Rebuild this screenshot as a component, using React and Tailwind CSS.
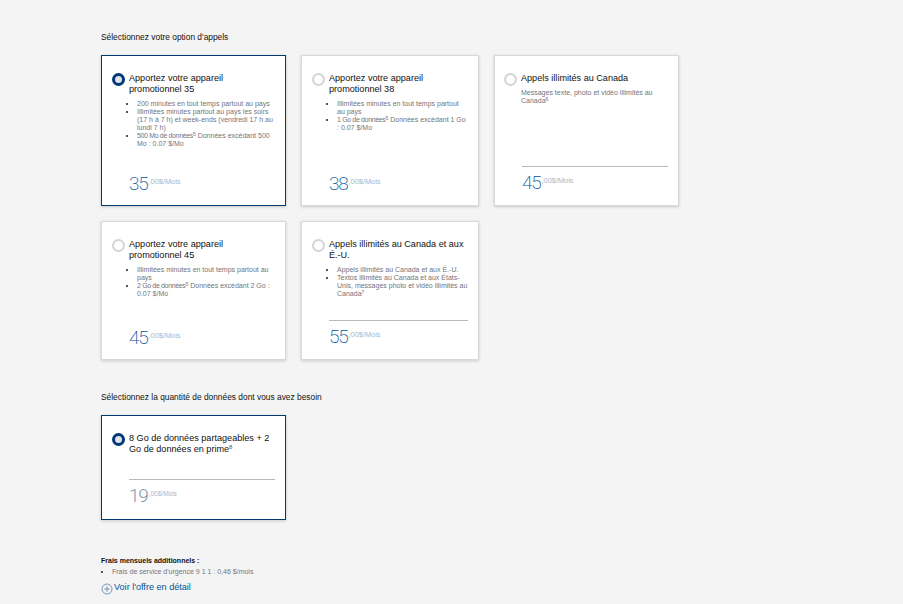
import React from "react";

const sans = "font-['Liberation_Sans',Arial,sans-serif]";

function Radio({ on }) {
  return on ? (
    <span className="block h-[13px] w-[13px] shrink-0 rounded-full border-[3.5px] border-[#003778] bg-[#dfe3e8]" />
  ) : (
    <span className="block h-[13px] w-[13px] shrink-0 rounded-full border-2 border-[#d4d4d4] bg-white" />
  );
}

function Price({ value, muted }) {
  return (
    <div className="flex items-start">
      <span className={`font-['Roboto',sans-serif] text-[19px] leading-[20px] tracking-[-1.2px] ${muted ? "font-light text-[#7f97b0]" : "font-extralight text-[#00549a]"}`}>{value}</span>
      <span className={`mt-[3px] ml-[1px] leading-[10px] text-[#a9b6c9] ${muted ? "text-[6.5px]" : "text-[7.4px]"}`}>,00$/Mois</span>
    </div>
  );
}

function Card({ title, on, items, text, price, rule, className, sup, nudge, muted }) {
  return (
    <div
      className={`flex flex-col px-[10px] pt-[17px] border ${on ? "border-[#003a70]" : "border-[#d8d8d8]"} bg-white shadow-[0_1px_3px_rgba(0,0,0,0.18)] ${className}`}
    >
      <div className={`flex gap-[4px] ${nudge ? "-ml-[1px]" : ""}`}>
        <Radio on={on} />
        <div className="text-[9.1px] leading-[11px] text-[#111]">
          {title}
          {sup && <sup className="text-[6px] leading-none text-[#555]">{sup}</sup>}
        </div>
      </div>
      <div className={`ml-[17px] flex-1 text-[7px] leading-[8px] text-[#74747c] ${text ? "mt-[3px]" : "mt-[5px]"}`}>
        {text && <p className={nudge ? "-ml-[1px]" : ""}>{text}</p>}
        {items && (
          <ul className="list-[square] pl-[8px] marker:text-[#555]">
            {items.map((it, i) => (
              <li key={i}>{it}</li>
            ))}
          </ul>
        )}
      </div>
      <div className={`ml-[17px] h-[29px] ${muted ? "mb-[11px]" : "mb-[10px]"} ${rule ? "border-t border-[#b9b9b9]" : ""}`}>
        <div className={rule ? "mt-[6px]" : "mt-[8px]"}>
          <Price value={price} muted={muted} />
        </div>
      </div>
    </div>
  );
}

const S = ({ children }) => <sup className="text-[5px] leading-none">{children}</sup>;
const T = ({ children }) => <span className="tracking-[-0.35px]">{children}</span>;

export default function App() {
  return (
    <div className={`${sans} h-[604px] w-[903px] overflow-hidden bg-[#f4f4f4] pl-[101px] pt-[32px]`}>
      <h2 className="text-[8.4px] leading-[11px] font-normal text-[#111]">Sélectionnez votre option d'appels</h2>
      <div className="mt-[12px] flex gap-[15px]">
        <Card
          className="h-[151px] w-[185px]"
          on
          title="Apportez votre appareil promotionnel 35"
          price="35"
          items={[
            "200 minutes en tout temps partout au pays",
            "Illimitées minutes partout au pays les soirs (17 h à 7 h) et week-ends (vendredi 17 h au lundi 7 h)",
            <><T>500 Mo de données</T><S>5</S> Données excédant 500 Mo : 0.07 $/Mo</>,
          ]}
        />
        <Card
          className="h-[151px] w-[178px]"
          title="Apportez votre appareil promotionnel 38"
          price="38"
          items={[
            "Illimitées minutes en tout temps partout au pays",
            <><T>1 Go de données</T><S>5</S> Données excédant 1 Go : 0.07 $/Mo</>,
          ]}
        />
        <Card
          className="h-[151px] w-[185px]"
          title="Appels illimités au Canada"
          price="45"
          rule
          nudge
          text={<>Messages texte, photo et vidéo illimités au Canada<S>6</S></>}
        />
      </div>
      <div className="mt-[15px] flex gap-[15px]">
        <Card
          className="h-[139px] w-[185px]"
          title="Apportez votre appareil promotionnel 45"
          price="45"
          items={[
            "Illimitées minutes en tout temps partout au pays",
            <><T>2 Go de données</T><S>5</S> Données excédant 2 Go : 0.07 $/Mo</>,
          ]}
        />
        <Card
          className="h-[139px] w-[178px]"
          title="Appels illimités au Canada et aux É.-U."
          price="55"
          rule
          items={[
            "Appels illimités au Canada et aux É.-U.",
            <>Textos illimités au Canada et aux États-Unis, messages photo et vidéo illimités au Canada<S>7</S></>,
          ]}
        />
      </div>
      <h2 className="mt-[32px] text-[8.4px] leading-[11px] font-normal text-[#111]">Sélectionnez la quantité de données dont vous avez besoin</h2>
      <div className="mt-[12px]">
        <Card
          className="h-[105px] w-[185px]"
          on
          title="8 Go de données partageables + 2 Go de données en prime"
          sup="8"
          price="19"
          rule
          muted
        />
      </div>
      <div className="mt-[37px] text-[7px] leading-[8px] font-bold text-[#111]">Frais mensuels additionnels :</div>
      <ul className="mt-[1px] list-[square] pl-[11px] text-[7px] leading-[11px] text-[#74747c] marker:text-[#555]">
        <li>Frais de service d'urgence 9 1 1 : 0,46 $/mois</li>
      </ul>
      <div className="mt-[4px] flex items-start gap-[1px] text-[9.1px] leading-[12px] text-[#00549a]">
        <svg width="12" height="12" viewBox="0 0 12 12" fill="none" stroke="#5a7fa8" strokeWidth="0.8" className="mt-[2px] shrink-0">
          <circle cx="6" cy="6" r="5" />
          <path d="M3.2 6h5.6M6 3.2v5.6" />
        </svg>
        <span>Voir l'offre en détail</span>
      </div>
    </div>
  );
}
